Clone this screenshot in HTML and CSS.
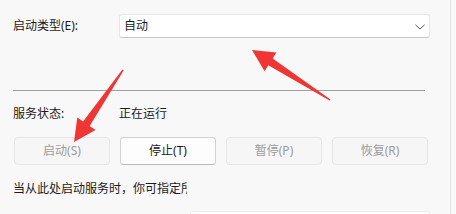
FILE: index.html
```html
<!DOCTYPE html>
<html>
<head>
<meta charset="utf-8">
<link rel="stylesheet" href="styles.css">
</head>
<body>
<div class="page">
  <div class="panel">
    <div class="row-type">
      <span class="label">启动类型(E):</span>
      <div class="combo">
        <span>自动</span>
        <svg class="chev" width="10" height="6" viewBox="0 0 10 6"><polyline points="0.5,0.8 5,5 9.5,0.8" fill="none" stroke="#5a5a5a" stroke-width="1"/></svg>
      </div>
    </div>
    <div class="sep"></div>
    <div class="row-status">
      <span class="label">服务状态:</span>
      <span>正在运行</span>
    </div>
    <div class="buttons">
      <div class="btn disabled">启动(S)</div>
      <div class="btn">停止(T)</div>
      <div class="btn disabled">暂停(P)</div>
      <div class="btn disabled">恢复(R)</div>
    </div>
    <div class="desc"><span>当从此处启动服务时，你可指定所适用的启动参数。</span></div>
    <div class="param"></div>
  </div>
  <div class="edge"></div>
  <svg class="arrows" width="456" height="214" viewBox="0 0 456 214">
    <polygon fill="#f03535" points="252,50 276.4,52.6 272.7,58.5 330.5,99.4 329.5,100.6 268.3,65.3 264.6,71.2"/>
    <polygon fill="#f03535" points="74,142 95.5,130 89.7,126.1 123.6,70.4 122.4,69.6 83.1,121.5 77.3,117.6"/>
  </svg>
</div>
</body>
</html>
```
FILE: styles.css
```css
html, body {
  margin: 0;
  padding: 0;
  background: #f8f8f8;
}
.page {
  position: relative;
  width: 456px;
  height: 214px;
  overflow: hidden;
  font-family: "Noto Sans", "Noto Sans CJK SC", sans-serif;
  font-size: 12px;
  color: #1b1b1b;
}
.panel {
  padding: 14px 26px 0 13px;
}
.row-type {
  display: flex;
  align-items: center;
  height: 24px;
}
.label {
  width: 106px;
  flex: none;
  line-height: 16px;
}
.combo {
  flex: 1;
  height: 24px;
  box-sizing: border-box;
  background: #ffffff;
  border: 1px solid #e6e6e6;
  border-bottom-color: #c9c9c9;
  border-radius: 3px;
  display: flex;
  align-items: center;
  justify-content: space-between;
  padding: 0 4px 0 4px;
  line-height: 16px;
}
.chev {
  margin-top: 1px;
}
.sep {
  margin-top: 52px;
  margin-right: 5px;
  height: 1px;
  background: #9f9f9f;
}
.row-status {
  display: flex;
  margin-top: 15px;
  line-height: 16px;
}
.buttons {
  display: grid;
  grid-template-columns: repeat(4, 1fr);
  column-gap: 10px;
  margin: 15px 2px 0 1px;
}
.btn {
  height: 28px;
  box-sizing: border-box;
  border: 1px solid #d2d2d2;
  border-bottom-color: #b9b9b9;
  border-radius: 4px;
  background: #fdfdfd;
  display: flex;
  align-items: center;
  justify-content: center;
  line-height: 16px;
}
.btn.disabled {
  background: #f6f6f6;
  border-color: #e6e6e6;
  color: #9b9b9b;
}
.desc {
  margin-top: 16px;
  width: 174px;
  overflow: hidden;
  white-space: nowrap;
  line-height: 16px;
}
.param {
  margin: 14px 0 0 177px;
  height: 10px;
  background: #ffffff;
  border: 1px solid #ececec;
  border-radius: 3px;
}
.edge {
  position: absolute;
  top: 0;
  left: 450px;
  width: 1px;
  height: 214px;
  background: #e2e2e2;
}
.arrows {
  position: absolute;
  left: 0;
  top: 0;
}
```
